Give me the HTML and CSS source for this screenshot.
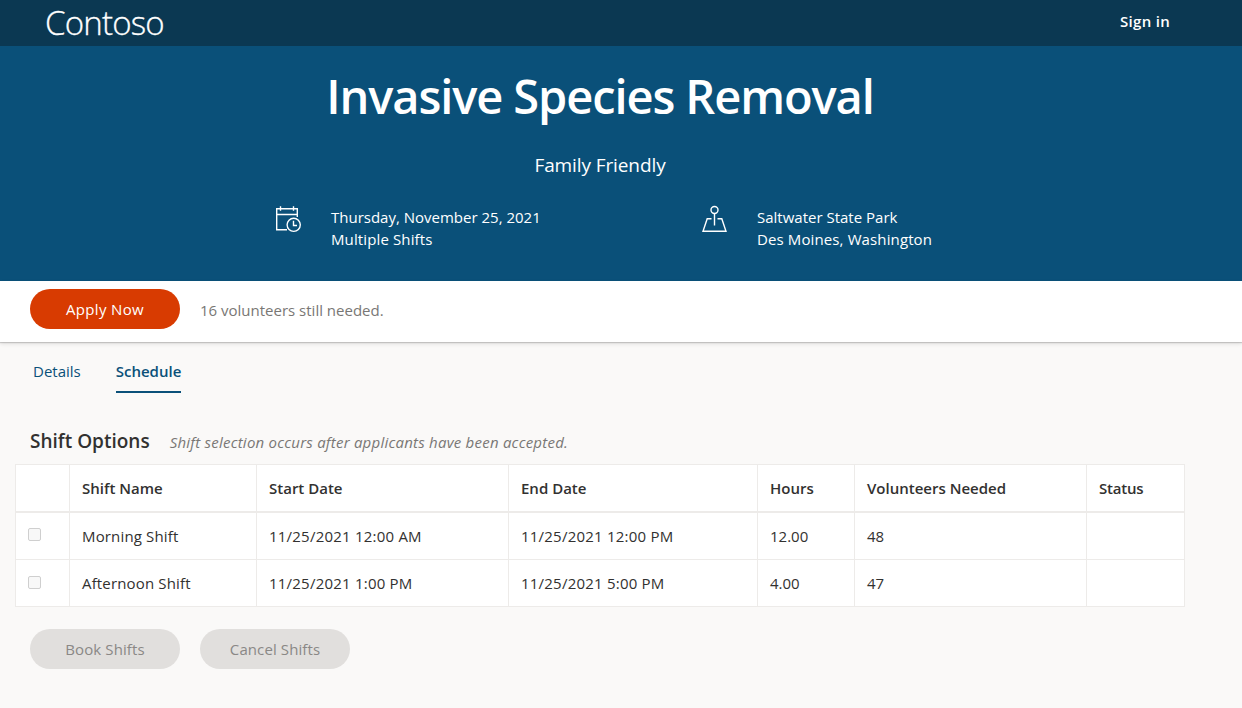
FILE: index.html
```html
<!DOCTYPE html>
<html lang="en">
<head>
<meta charset="utf-8">
<title>Invasive Species Removal</title>
<link rel="stylesheet" href="styles.css">
</head>
<body>
<header class="topbar"><a class="brand">Contoso</a><a class="signin">Sign in</a></header>
<section class="hero">
  <h1 class="title">Invasive Species Removal</h1>
  <p class="subtitle">Family Friendly</p>
  <div class="facts">
    <div class="fact">
      <svg class="icon" width="28" height="28" viewBox="0 0 28 28" fill="none" stroke="#fff" stroke-width="1.4"><path d="M12 24.8H1.7V3.7H22.3V12M1.7 9.5H22.3M5.5 1.2V5.8M18.5 1.2V5.8"/><circle cx="18.7" cy="19.8" r="6.6"/><path d="M18.5 15.8V20.5H22"/></svg>
      <div><div>Thursday, November 25, 2021</div><div class="looser">Multiple Shifts</div></div>
    </div>
    <div class="fact">
      <svg class="icon" width="28" height="28" viewBox="0 0 28 28" fill="none" stroke="#fff" stroke-width="1.4"><circle cx="13.5" cy="5" r="3.5"/><path d="M13.5 8.5V20.5M10.5 13.7H6.2L2 26.3H25L20.8 13.7H16.5"/></svg>
      <div><div>Saltwater State Park</div><div class="looser">Des Moines, Washington</div></div>
    </div>
  </div>
</section>
<section class="applybar"><button class="btn btn-primary">Apply Now</button><span class="needed">16 volunteers still needed.</span></section>
<main class="content">
  <nav class="tabs"><a class="tab">Details</a><a class="tab active">Schedule</a></nav>
  <div class="heading"><h2>Shift Options</h2><em>Shift selection occurs after applicants have been accepted.</em></div>
  <table class="shifts">
    <colgroup><col class="c1"><col class="c2"><col class="c3"><col class="c4"><col class="c5"><col class="c6"><col class="c7"></colgroup>
    <thead><tr><th></th><th>Shift Name</th><th>Start Date</th><th>End Date</th><th>Hours</th><th>Volunteers Needed</th><th class="status">Status</th></tr></thead>
    <tbody>
      <tr class="first"><td><span class="check"></span></td><td>Morning Shift</td><td class="date">11/25/2021 12:00 AM</td><td class="date">11/25/2021 12:00 PM</td><td class="num">12.00</td><td class="num">48</td><td></td></tr>
      <tr><td><span class="check"></span></td><td>Afternoon Shift</td><td class="date">11/25/2021 1:00 PM</td><td class="date">11/25/2021 5:00 PM</td><td class="num">4.00</td><td class="num">47</td><td></td></tr>
    </tbody>
  </table>
  <div class="actions"><button class="btn" disabled>Book Shifts</button><button class="btn" disabled>Cancel Shifts</button></div>
</main>
</body>
</html>
```
FILE: styles.css
```css
* { box-sizing: border-box; }
body { margin: 0; background: #faf9f8; color: #323130; font: 15px/22px "Open Sans", "Noto Sans", sans-serif; }
.topbar { height: 46px; padding: 0 72px 0 45px; display: flex; justify-content: space-between; background: #0b3852; color: #fff; }
.brand { font-size: 33px; line-height: 46px; font-weight: 300; letter-spacing: -.8px; -webkit-text-stroke: .3px #fff; }
.signin { font-size: 15px; line-height: 43px; font-weight: 600; letter-spacing: .3px; }
.hero { height: 235px; padding: 21px 42px 0 0; background: #0a5079; color: #fff; text-align: center; }
.title { margin: 0; font-size: 47px; line-height: 58px; font-weight: 600; letter-spacing: -1.1px; }
.subtitle { margin: 26px 0 0; font-size: 19px; line-height: 28px; letter-spacing: -.1px; }
.facts { display: grid; grid-template-columns: 426px 426px; justify-content: end; margin-top: 27px; padding-right: 73px; text-align: left; }
.fact { display: flex; gap: 28px; }
.icon { margin-top: -1px; }
.looser { letter-spacing: .12px; }
.applybar { height: 61px; padding: 8px 30px; display: flex; gap: 20px; background: #fff; box-shadow: 0 1px 1px rgba(0,0,0,.16), 0 2px 4px rgba(0,0,0,.1); }
.btn { width: 150px; height: 40px; padding: 0; border: 0; border-radius: 20px; background: #e1dfdd; color: #8a8886; font: inherit; letter-spacing: .1px; }
.btn-primary { background: #d83b01; color: #fff; letter-spacing: .35px; }
.needed { color: #797775; line-height: 43px; }
.content { padding: 18px 15px; }
.tabs { display: flex; gap: 35px; padding-left: 18px; color: #0a5079; }
.tab { height: 33px; }
.active { font-weight: 600; border-bottom: 2px solid #0a5079; }
.heading { display: flex; align-items: baseline; gap: 20px; height: 71px; padding: 34px 15px 0; }
.heading h2 { margin: 0; font-size: 19px; line-height: 28px; font-weight: 600; }
.heading em { color: #797775; letter-spacing: .23px; }
.shifts { width: 1169px; table-layout: fixed; border-collapse: collapse; background: #fff; }
.shifts th, .shifts td { border: 1px solid #edebe9; padding: 0 12px; height: 47px; text-align: left; }
.shifts th { border-bottom-width: 2px; font-weight: 600; }
.shifts td { letter-spacing: .15px; }
.shifts .first td { height: 48px; }
.shifts .date { letter-spacing: .22px; }
.shifts .num { letter-spacing: 0; }
.shifts .status { letter-spacing: -.2px; }
.c1 { width: 54px; } .c2 { width: 187px; } .c3 { width: 252px; } .c4 { width: 249px; } .c5 { width: 97px; } .c6 { width: 232px; } .c7 { width: 98px; }
.check { display: block; width: 13px; height: 13px; margin-bottom: 2px; border: 1px solid #cfcfcf; border-radius: 2px; background: #f8f8f8; }
.actions { display: flex; gap: 20px; padding: 22px 15px; }
```
